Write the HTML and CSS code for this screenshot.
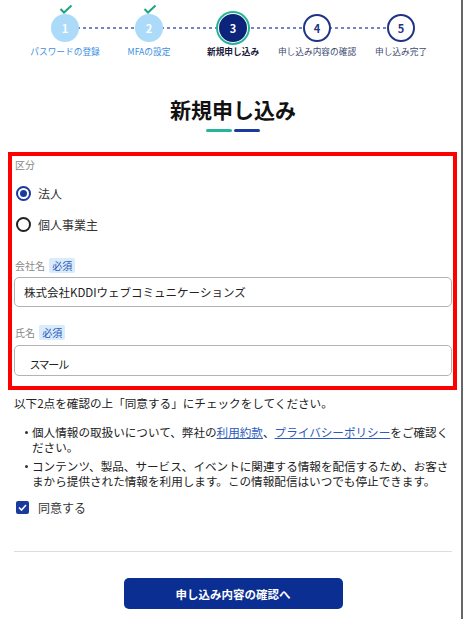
FILE: index.html
```html
<!DOCTYPE html>
<html lang="ja">
<head>
    <meta charset="UTF-8">
    <meta name="viewport" content="width=device-width, initial-scale=1.0">
    <title>新規申し込み</title>
    <link rel="stylesheet" href="styles.css">
</head>
<body>
    <div class="page">
        <div class="content">
            <ol class="stepper">
                <li class="step done">
                    <span class="check"><svg width="14" height="10" viewBox="0 0 14 10"><path d="M1.5 5 L5 8.5 L12.5 1.5" fill="none" stroke="#1fa47e" stroke-width="2"/></svg></span>
                    <span class="circle">1</span>
                    <span class="step-label">パスワードの登録</span>
                </li>
                <li class="step done">
                    <span class="check"><svg width="14" height="10" viewBox="0 0 14 10"><path d="M1.5 5 L5 8.5 L12.5 1.5" fill="none" stroke="#1fa47e" stroke-width="2"/></svg></span>
                    <span class="circle">2</span>
                    <span class="step-label">MFAの設定</span>
                </li>
                <li class="step current">
                    <span class="circle">3</span>
                    <span class="step-label">新規申し込み</span>
                </li>
                <li class="step">
                    <span class="circle">4</span>
                    <span class="step-label">申し込み内容の確認</span>
                </li>
                <li class="step">
                    <span class="circle">5</span>
                    <span class="step-label">申し込み完了</span>
                </li>
            </ol>

            <h1 class="title">新規申し込み</h1>
            <div class="title-bar"><span class="bar-teal"></span><span class="bar-navy"></span></div>

            <div class="highlight">
                <div class="field-label">区分</div>
                <label class="radio-row">
                    <span class="radio checked"></span>
                    <span>法人</span>
                </label>
                <label class="radio-row">
                    <span class="radio"></span>
                    <span>個人事業主</span>
                </label>

                <div class="field-label company-label">会社名 <span class="badge">必須</span></div>
                <input class="text-input" type="text" value="株式会社KDDIウェブコミュニケーションズ">

                <div class="field-label name-label">氏名 <span class="badge">必須</span></div>
                <input class="text-input name-input" type="text" value="スマール">
            </div>

            <p class="intro">以下2点を確認の上「同意する」にチェックをしてください。</p>
            <ul class="notes">
                <li>個人情報の取扱いについて、弊社の<a href="#">利用約款</a>、<a href="#">プライバシーポリシー</a>をご確認ください。</li>
                <li>コンテンツ、製品、サービス、イベントに関連する情報を配信するため、お客さまから提供された情報を利用します。この情報配信はいつでも停止できます。</li>
            </ul>

            <label class="agree-row">
                <span class="checkbox"><svg width="9" height="7" viewBox="0 0 9 7"><path d="M1 3.5 L3.5 6 L8 1" fill="none" stroke="#fff" stroke-width="1.6"/></svg></span>
                <span>同意する</span>
            </label>

            <hr class="divider">

            <div class="actions">
                <button class="btn">申し込み内容の確認へ</button>
            </div>
        </div>
    </div>
</body>
</html>
```

FILE: styles.css
```css
* { margin: 0; padding: 0; box-sizing: border-box; }
body {
    font-family: "Noto Sans CJK JP", "Noto Sans", sans-serif;
    background: #fff;
    color: #222;
}
.page {
    width: 463px;
    min-height: 619px;
    border-right: 2px solid #666;
}
.content { padding: 0 9px 0 14px; }

/* stepper */
.stepper {
    list-style: none;
    display: flex;
    width: 420px;
    margin: 0 auto;
    padding-top: 14px;
}
.step {
    position: relative;
    width: 84px;
    display: flex;
    flex-direction: column;
    align-items: center;
}
.step + .step::before {
    content: "";
    position: absolute;
    top: 13px;
    left: -42px;
    width: 84px;
    height: 2px;
    background: repeating-linear-gradient(to right, #7384c8 0 3px, transparent 3px 6px);
}
.circle {
    position: relative;
    z-index: 1;
    width: 28px;
    height: 28px;
    border-radius: 50%;
    border: 2px solid #1f3486;
    background: #fff;
    color: #1f3486;
    font-size: 11px;
    font-weight: bold;
    display: flex;
    align-items: center;
    justify-content: center;
}
.done .circle { background: #acdbfa; border-color: #acdbfa; color: #fff; }
.current .circle {
    background: #0d247b;
    border-color: #0d247b;
    color: #fff;
    box-shadow: 0 0 0 1px #fff, 0 0 0 3px #23b595;
}
.check {
    position: absolute;
    top: -10px;
    left: 36px;
    z-index: 2;
    display: flex;
}
.step-label {
    margin-top: 5px;
    font-size: 8.7px;
    line-height: 10px;
    white-space: nowrap;
    color: #3d4a70;
}
.done .step-label { color: #3c8fe2; }
.current .step-label { color: #1a1a3a; font-weight: bold; }

/* title */
.title {
    margin-top: 38px;
    text-align: center;
    font-size: 21px;
    line-height: 28px;
    font-weight: bold;
    color: #111;
}
.title-bar {
    display: flex;
    justify-content: center;
    gap: 2px;
    margin-top: 6px;
}
.title-bar span { width: 26px; height: 3px; border-radius: 2px; }
.bar-teal { background: #26b59b; }
.bar-navy { background: #1a3a9c; }

/* highlighted form area */
.highlight {
    margin: 20px -5px 0 -6px;
    border: 4px solid #ff0000;
    padding: 2px 1px 10px 2px;
}
.field-label {
    font-size: 10px;
    line-height: 14px;
    color: #888;
    padding-left: 1px;
}
.radio-row {
    display: flex;
    align-items: center;
    height: 20px;
    margin-top: 11px;
    font-size: 12px;
    color: #333;
}
.radio {
    width: 15px;
    height: 15px;
    margin: 0 7px 0 2px;
    border: 2px solid #222;
    border-radius: 50%;
    display: flex;
    align-items: center;
    justify-content: center;
}
.radio.checked { border-color: #1b3a9e; }
.radio.checked::after {
    content: "";
    width: 7px;
    height: 7px;
    border-radius: 50%;
    background: #1b3a9e;
}
.company-label { margin-top: 24px; line-height: 16px; }
.name-label { margin-top: 18px; line-height: 16px; }
.badge {
    display: inline-block;
    margin-left: 2px;
    padding: 0 3px;
    background: #d8ecfc;
    color: #2a55b5;
    border-radius: 2px;
    line-height: 15px;
}
.text-input {
    display: block;
    width: 100%;
    height: 30px;
    margin-top: 3px;
    padding: 0 9px;
    border: 1px solid #b3b3b3;
    border-radius: 5px;
    font-family: inherit;
    font-size: 11.5px;
    color: #222;
    background: #fff;
}
.name-input {
    height: 31px;
    margin-top: 4px;
    padding: 6px 0 0 15px;
    font-size: 11px;
    font-feature-settings: "palt";
    letter-spacing: -0.5px;
}

/* agreement */
.intro {
    margin-top: 5px;
    font-size: 11.6px;
    line-height: 16px;
    color: #222;
}
.notes {
    list-style: none;
    margin-top: 14px;
    font-size: 11.6px;
    line-height: 15px;
    color: #222;
}
.notes li {
    position: relative;
    padding-left: 18px;
}
.notes li + li { margin-top: 4px; }
.notes li::before {
    content: "";
    position: absolute;
    left: 11px;
    top: 6px;
    width: 3px;
    height: 3px;
    border-radius: 50%;
    background: #333;
}
.notes a { color: #2c5bbd; text-decoration: underline; }
.agree-row {
    display: flex;
    align-items: center;
    height: 16px;
    margin-top: 10px;
    font-size: 12px;
    color: #333;
}
.checkbox {
    width: 13px;
    height: 13px;
    margin: 0 9px 0 2px;
    border-radius: 2px;
    background: #1b3a9e;
    display: flex;
    align-items: center;
    justify-content: center;
}
.divider {
    margin-top: 36px;
    border: none;
    border-top: 1px solid #ddd;
}
.actions {
    display: flex;
    justify-content: center;
    margin-top: 26px;
}
.btn {
    width: 219px;
    height: 31px;
    border: none;
    border-radius: 5px;
    background: #0a2e92;
    color: #fff;
    font-family: inherit;
    font-size: 11.5px;
    font-weight: bold;
    cursor: pointer;
}
```
